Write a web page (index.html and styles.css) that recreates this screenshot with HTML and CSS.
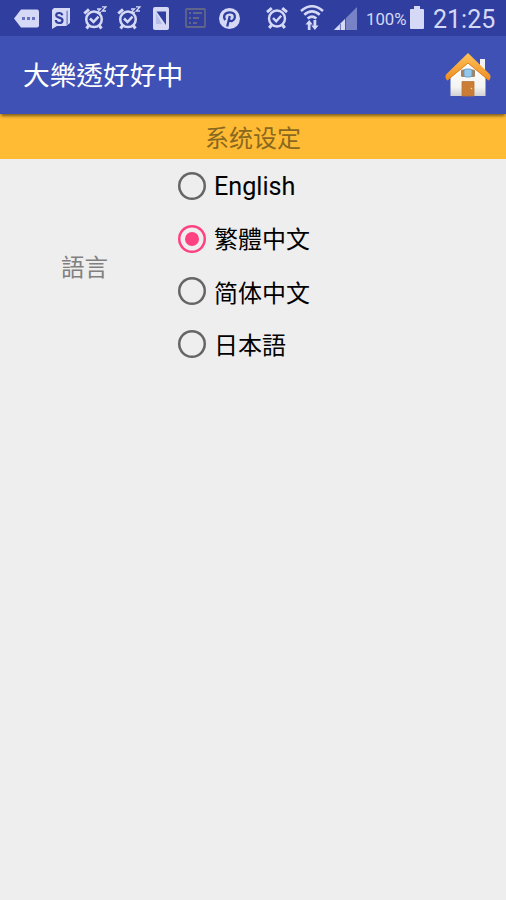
FILE: index.html
```
<!DOCTYPE html>
<html lang="zh-Hant">
<head>
<meta charset="utf-8">
<title>大樂透好好中</title>
<link rel="stylesheet" href="styles.css">
</head>
<body>
<svg class="defs" width="0" height="0">
  <symbol id="alarm" viewBox="0 0 24 24">
    <g fill="none" stroke="currentColor" stroke-width="2.5">
      <circle cx="11" cy="13.3" r="7.8"/>
      <path d="M7 12.500l3.500 3.500 5-5.400"/>
      <path d="M1.300 7.500L6 3.300M5.800 19.500l-2.300 3M16.200 19.500l2.300 3" stroke-width="3"/>
    </g>
  </symbol>
</svg>
<div class="screen">
  <div class="status">
    <div class="notices">
      <svg class="tag" viewBox="0 0 25 19"><path d="M7 .5h16q2 0 2 2v14q0 2-2 2H7L0 9.5z" fill="currentColor"/><path d="M8 8h3v3H8zM13 8h3v3h-3zM18 8h3v3h-3z" fill="#6872bd"/></svg>
      <svg class="memo" viewBox="0 0 19 21"><path d="M3 0h16v15l-4 3H6l-5 3V2z" fill="currentColor"/><path d="M15.500 3V17l1.200-1V2.500z" fill="#6671bb"/><path d="M11.300 7.300Q10.800 5 8.100 5 5.200 5 5.200 7.300c0 3 6.300 1.700 6.300 4.900 0 2-1.500 2.800-3.300 2.800-2.300 0-3.300-1.300-3.400-3" fill="none" stroke="#303f9f" stroke-width="2.200"/></svg>
      <svg class="clock" viewBox="0 0 24 24"><use href="#alarm" width="24" height="24"/><path d="M14 3h3.5L14 6.5h4M19 .8h4L19.2 5H23" fill="none" stroke="currentColor" stroke-width="1.3"/></svg>
      <svg class="clock" viewBox="0 0 24 24"><use href="#alarm" width="24" height="24"/><path d="M14 3h3.5L14 6.5h4M19 .8h4L19.2 5H23" fill="none" stroke="currentColor" stroke-width="1.3"/></svg>
      <svg class="phone" viewBox="0 0 16 23"><rect width="16" height="23" rx="2" fill="currentColor"/><path d="M3.500 4.500H13V18z" fill="#303f9f"/><path d="M3 6l6 11H3z" fill="#b6bde9"/></svg>
      <svg class="list" viewBox="0 0 21 20"><g fill="none" stroke="#626587" stroke-width="1.8"><rect x="1" y="1" width="19" height="18" rx="1"/><path d="M4 5h2M8 5h9M4 10h2M8 10h6M4 15h2M8 15h4"/></g></svg>
      <svg class="pin" viewBox="0 0 21 21"><circle cx="10.5" cy="10.5" r="10.5" fill="currentColor"/><path d="M6.200 12C3.500 8 6.200 4.300 10.700 4.300c3.900 0 5.600 2.400 5.100 5.300-.6 3.500-4.500 4.500-5.600 2.200M10.800 8L8.200 18.500" fill="none" stroke="#303f9f" stroke-width="2.300"/></svg>
    </div>
    <div class="system">
      <svg class="alarm" viewBox="0 0 22 24"><g fill="none" stroke="currentColor" stroke-width="2.4"><circle cx="11" cy="12.5" r="8"/><path d="M7 12l3.2 3.3 5-5.5"/><path d="M1 6.2l4.8-4M21 6.2l-4.8-4M5.5 19l-2.3 3M16.5 19l2.3 3" stroke-width="3"/></g></svg>
      <svg class="wifi" viewBox="0 0 24 25"><g fill="none" stroke="currentColor" stroke-width="2.5"><path d="M1 6Q12-3.5 23 6M4.3 9.8q7.7-6.8 15.4 0M7.6 13.500q4.4-3.8 8.8 0"/></g><path d="M7.800 25V19.500H5.500L9.200 15l3.500 4.500h-2.200V25zM13.500 15v5.500h-2.200l3.600 4.500 3.600-4.500h-2.200V15z" fill="currentColor"/></svg>
      <svg class="signal" viewBox="0 0 23 23"><path d="M0 23L23 0v23z" fill="#7882c7"/><path d="M0 23L11 12v11z" fill="currentColor"/><path d="M6.4 17v6M11.5 11v12" stroke="#303f9f" stroke-width=".7"/></svg>
      <span class="percent">100%</span>
      <svg class="battery" viewBox="0 0 14 23"><path d="M4 0h6v3h3q1 0 1 1v18q0 1-1 1H1q-1 0-1-1V4q0-1 1-1h3z" fill="currentColor"/></svg>
      <span class="time">21:25</span>
    </div>
  </div>
  <header class="bar">
    <h1>大樂透好好中</h1>
    <svg class="home" viewBox="0 0 46 46">
      <defs>
        <linearGradient id="roof" x2="0" y2="1"><stop stop-color="#ffc35a"/><stop offset="1" stop-color="#ee8d20"/></linearGradient>
        <linearGradient id="wall" x2="0" y2="1"><stop stop-color="#fff"/><stop offset=".75" stop-color="#f4f4f2"/><stop offset="1" stop-color="#cfd1d4"/></linearGradient>
      </defs>
      <path d="M35 7h5v15h-5z" fill="#f0f1f5"/>
      <path d="M23 8L40.500 24v20h-35V24z" fill="url(#wall)"/>
      <path d="M23 1L1 22.500Q-.5 27 2.500 28.500L23 11.500l20.500 17q3-1.500 1.500-6z" fill="url(#roof)"/>
      <path d="M2.500 28L23 11l20.500 17" fill="none" stroke="#d8791c" stroke-width=".8"/>
      <rect x="16" y="17.500" width="14" height="7.500" rx="1.500" fill="#a48160"/>
      <rect x="19" y="17" width="8" height="8" rx="2" fill="#91c9ee" stroke="#6996bc" stroke-width=".8"/>
      <path d="M17 29.500h12V44H17z" fill="#cc7d35" stroke="#b9763b" stroke-width=".8"/>
      <circle cx="26.500" cy="36.500" r=".8" fill="#ffdf91"/>
    </svg>
  </header>
  <main>
    <h2 lang="zh-Hans">系统设定</h2>
    <section class="setting">
      <div class="label">語言</div>
      <div class="options">
        <label><i class="radio"></i><span class="latin">English</span></label>
        <label><i class="radio on"></i><span>繁體中文</span></label>
        <label><i class="radio"></i><span lang="zh-Hans" class="hans">简体中文</span></label>
        <label><i class="radio"></i><span lang="ja" class="ja">日本語</span></label>
      </div>
    </section>
  </main>
</div>
</body>
</html>
```
FILE: styles.css
```
* { box-sizing: border-box; }
body { margin: 0; background: #eee; font-family: Roboto, "Noto Sans CJK TC", sans-serif; }
.defs, svg { display: block; flex: none; }
.defs { position: absolute; }
.screen { width: 506px; height: 900px; overflow: hidden; }
.status { height: 36px; background: #303f9f; color: #d5d9f6; display: flex; justify-content: space-between; padding: 0 11px 0 14px; }
.notices, .system { display: flex; align-items: center; }
.tag { width: 25px; height: 19px; }
.memo { width: 19px; height: 21px; margin-left: 12px; }
.clock { width: 24px; height: 24px; margin-left: 13px; margin-top: -1px; }
.clock + .clock { margin-left: 10px; }
.phone { width: 16px; height: 23px; margin-left: 12px; }
.list { width: 21px; height: 20px; margin-left: 16px; }
.pin { width: 21px; height: 21px; margin-left: 13px; }
.alarm { width: 22px; height: 24px; }
.wifi { width: 24px; height: 25px; margin-left: 12px; margin-top: -2px; }
.signal { width: 23px; height: 23px; margin-left: 10px; }
.percent { width: 40px; margin: 1px 4px 0 9px; font-size: 16.800px; }
.battery { width: 14px; height: 23px; margin-top: -2px; }
.time { width: 62px; margin: 3px 0 0 9px; font-size: 25px; line-height: 32px; }
.bar { position: relative; height: 78px; padding: 0 15px 0 23px; background: #3f51b5; color: #fff; display: flex; align-items: center; justify-content: space-between; box-shadow: 0 3px 3px -1px rgba(0, 0, 0, .5); }
h1 { margin: 2px 0 0; font-size: 26.700px; line-height: 40px; font-weight: 400; }
.home { width: 46px; height: 46px; }
h2 { margin: 0; height: 45px; background: #ffbb33; color: #896820; font: 400 24px/46px "Noto Sans CJK SC", sans-serif; text-align: center; }
.setting { display: grid; grid-template-columns: 169px 1fr; align-items: center; }
.label { padding-top: 3px; text-align: center; font-size: 23.500px; color: #808080; }
.options { padding-left: 8px; }
.options label { height: 52.700px; display: flex; align-items: center; color: #000; font-size: 24px; line-height: 34px; }
.options span { margin-left: 7px; padding-top: 3px; }
.options .latin { font-size: 25.200px; padding-top: 4px; }
.options .hans { font-family: "Noto Sans CJK SC", sans-serif; padding-top: 2px; }
.options .ja { font-family: "Noto Sans CJK JP", sans-serif; padding-top: 2px; }
.radio { width: 30px; height: 30px; margin-top: 1px; border: 1px solid transparent; border-radius: 50%; box-shadow: inset 0 0 0 2.500px #656565; display: grid; place-items: center; }
.radio.on { box-shadow: inset 0 0 0 2.500px #ff4081; }
.radio.on::after { content: ""; width: 14px; height: 14px; border-radius: 50%; background: #ff4081; }
```
